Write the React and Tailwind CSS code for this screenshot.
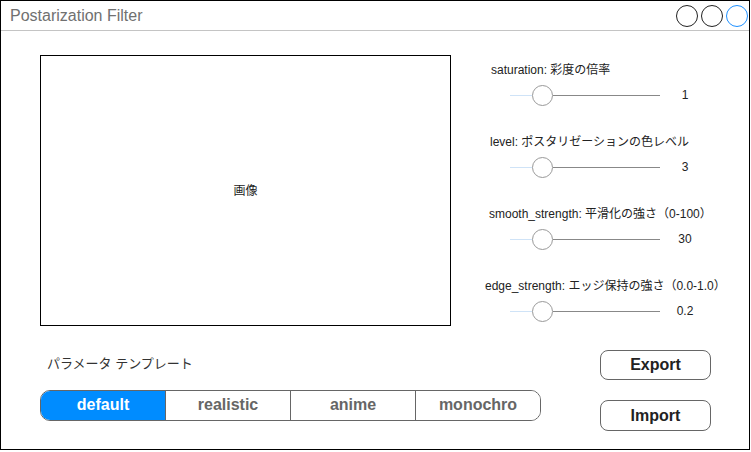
import { useState } from "react";

const sliders = [
  { key: "saturation", label: "saturation: 彩度の倍率", value: "1", indent: "ml-[6px]" },
  { key: "level", label: "level: ポスタリゼーションの色レベル", value: "3", indent: "ml-[5px]" },
  { key: "smooth", label: "smooth_strength: 平滑化の強さ（0-100）", value: "30", indent: "ml-[4px]" },
  { key: "edge", label: "edge_strength: エッジ保持の強さ（0.0-1.0）", value: "0.2", indent: "ml-0" },
];

const templates = ["default", "realistic", "anime", "monochro"];

const SliderRow = ({ label, value, indent }) => (
  <div className="flex flex-col">
    <div className={`h-4 text-[12px] leading-4 text-[#222] whitespace-nowrap ${indent}`}>
      {label}
    </div>
    <div className="mt-[6px] flex h-[22px] items-center">
      <div className="ml-[25px] flex w-[150px] items-center">
        <div className="h-px w-[22px] bg-[#cfe3f7]"></div>
        <div className="h-[21px] w-[21px] rounded-full border border-[#999] bg-white"></div>
        <div className="h-px flex-1 bg-[#888]"></div>
      </div>
      <div className="w-[50px] text-center text-[12px] text-[#222]">{value}</div>
    </div>
  </div>
);

const App = () => {
  const [active, setActive] = useState("default");

  return (
    <div
      className="h-[452px] w-[751px] bg-white"
      style={{ fontFamily: '"Liberation Sans", Arial, "Noto Sans CJK JP", sans-serif' }}
    >
      <div className="flex h-[450px] w-[750px] flex-col border border-black">
        {/* title bar */}
        <div className="flex h-[30px] items-center border-b border-[#c4c4c4] pl-[9px] pr-px">
          <span className="mt-px text-[16px] text-[#707070]">Postarization Filter</span>
          <div className="ml-auto flex gap-[3px]">
            <div className="h-[22px] w-[22px] rounded-full border border-[#222]"></div>
            <div className="h-[22px] w-[22px] rounded-full border border-[#222]"></div>
            <div className="h-[22px] w-[22px] rounded-full border border-[#1e90ff]"></div>
          </div>
        </div>

        <div className="pl-[39px]">
          {/* top: preview + sliders */}
          <div className="flex">
            <div className="mt-[24px] flex h-[271px] w-[411px] items-center justify-center border border-black">
              <span className="text-[12px] text-[#222]">画像</span>
            </div>
            <div className="ml-[34px] mt-[31px] flex flex-col gap-[28px]">
              {sliders.map((s) => (
                <SliderRow key={s.key} label={s.label} value={s.value} indent={s.indent} />
              ))}
            </div>
          </div>

          {/* bottom: templates + buttons */}
          <div className="mt-[24px] flex">
            <div className="flex w-[501px] flex-col">
              <div className="ml-[7px] mt-[5px] h-[18px] text-[13px] leading-[18px] text-[#333]">
                パラメータ テンプレート
              </div>
              <div className="mt-[17px] flex h-[31px] overflow-hidden rounded-[10px] border border-[#666]">
                {templates.map((t, i) => (
                  <button
                    key={t}
                    onClick={() => setActive(t)}
                    className={
                      "flex-1 pb-px text-[16px] font-bold " +
                      (i > 0 ? "border-l border-[#666] " : "") +
                      (active === t ? "bg-[#008cff] text-white" : "bg-white text-[#666]")
                    }
                  >
                    {t}
                  </button>
                ))}
              </div>
            </div>
            <div className="ml-[59px] flex flex-col gap-[20px]">
              <button className="h-[30px] w-[111px] rounded-lg border border-[#666] text-[16px] font-bold text-[#222]">
                Export
              </button>
              <button className="h-[31px] w-[111px] rounded-lg border border-[#666] text-[16px] font-bold text-[#222]">
                Import
              </button>
            </div>
          </div>
        </div>
      </div>
    </div>
  );
};

export default App;
